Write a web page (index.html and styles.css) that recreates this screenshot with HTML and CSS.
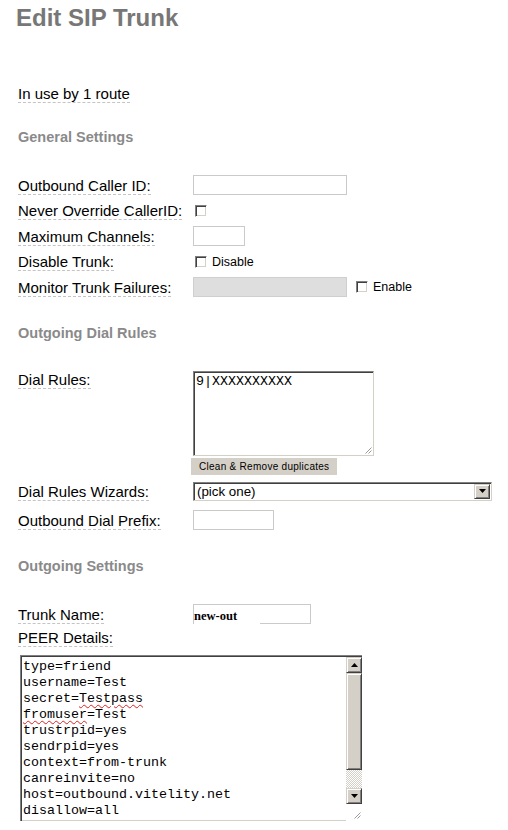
FILE: index.html
```html
<!DOCTYPE html>
<html>
<head>
<meta charset="utf-8">
<title>Edit SIP Trunk</title>
<link rel="stylesheet" href="styles.css">
</head>
<body>
<div class="page">
  <h1 class="title">Edit SIP Trunk</h1>
  <p class="usage"><span class="lbl">In use by 1 route</span></p>

  <h2 class="section">General Settings</h2>
  <div class="rows general">
    <div class="row"><span class="cell"><span class="lbl">Outbound Caller ID:</span></span><div class="ctl"><input class="inp w154" type="text"></div></div>
    <div class="row"><span class="cell"><span class="lbl">Never Override CallerID:</span></span><div class="ctl"><input class="chk" type="checkbox"></div></div>
    <div class="row"><span class="cell"><span class="lbl">Maximum Channels:</span></span><div class="ctl"><input class="inp w52" type="text"></div></div>
    <div class="row"><span class="cell"><span class="lbl">Disable Trunk:</span></span><div class="ctl"><input class="chk" type="checkbox"><span class="small">Disable</span></div></div>
    <div class="row"><span class="cell"><span class="lbl">Monitor Trunk Failures:</span></span><div class="ctl"><input class="inp w154" type="text" disabled><input class="chk gap" type="checkbox"><span class="small">Enable</span></div></div>
  </div>

  <h2 class="section s2">Outgoing Dial Rules</h2>
  <div class="rows dial">
    <div class="row top"><span class="cell"><span class="lbl">Dial Rules:</span></span>
      <div class="stack">
        <div class="area rules">
          <div class="mono">9|XXXXXXXXXX</div>
          <svg class="grip" width="7" height="7" viewBox="0 0 7 7"><path d="M6.5 0.5 L0.5 6.5 M6.5 3.5 L3.5 6.5" stroke="#9a9a9a" stroke-width="1" fill="none"/></svg>
        </div>
        <div class="btn">Clean &amp; Remove duplicates</div>
      </div>
    </div>
    <div class="row r-wiz"><span class="cell"><span class="lbl">Dial Rules Wizards:</span></span>
      <div class="select"><span class="sel-text">(pick one)</span><span class="w-btn sel-btn"><svg width="7" height="4" viewBox="0 0 7 4"><path d="M0 0H7L3.5 4Z" fill="#000"/></svg></span></div>
    </div>
    <div class="row r-pre"><span class="cell"><span class="lbl">Outbound Dial Prefix:</span></span><div class="ctl"><input class="inp w80" type="text"></div></div>
  </div>

  <h2 class="section s3">Outgoing Settings</h2>
  <div class="rows trunk">
    <div class="row"><span class="cell"><span class="lbl">Trunk Name:</span></span>
      <div class="ctl"><div class="tn-box"><span class="tn-val">new-out</span></div></div>
    </div>
  </div>
  <p class="peer-label"><span class="lbl">PEER Details:</span></p>
  <div class="peer">
    <div class="peer-text mono">
      <div>type=friend</div>
      <div>username=Test</div>
      <div>secret=<span class="sp">Testpass</span></div>
      <div><span class="sp">fromuser</span>=Test</div>
      <div>trustrpid=yes</div>
      <div>sendrpid=yes</div>
      <div>context=from-trunk</div>
      <div>canreinvite=no</div>
      <div>host=outbound.vitelity.net</div>
      <div>disallow=all</div>
    </div>
    <div class="vscroll">
      <span class="w-btn sb-btn"><svg width="7" height="4" viewBox="0 0 7 4"><path d="M0 4H7L3.5 0Z" fill="#000"/></svg></span>
      <span class="w-btn thumb"></span>
      <span class="track"></span>
      <span class="w-btn sb-btn"><svg width="7" height="4" viewBox="0 0 7 4"><path d="M0 0H7L3.5 4Z" fill="#000"/></svg></span>
      <span class="corner"><svg width="7" height="7" viewBox="0 0 7 7"><path d="M6.5 0.5 L0.5 6.5 M6.5 3.5 L3.5 6.5" stroke="#9a9a9a" stroke-width="1" fill="none"/></svg></span>
    </div>
  </div>
</div>
</body>
</html>
```

FILE: styles.css
```css
* { box-sizing: border-box; }

body {
  margin: 0;
  background: #fff;
  color: #000;
  font-family: "Liberation Sans", Arial, sans-serif;
}

.page {
  padding: 0 0 0 18px;
}

.title {
  margin: 4px 0 0 -2px;
  font-size: 24px;
  line-height: 28px;
  font-weight: bold;
  color: #777;
}

.usage {
  margin: 53px 0 0;
  font-size: 15px;
  line-height: 17px;
}

.lbl {
  border-bottom: 1px dashed #c4c4c4;
}

.section {
  margin: 27px 0 0;
  font-size: 14.5px;
  line-height: 17px;
  font-weight: bold;
  color: #8a8a8a;
}

.section.s2 { margin-top: 28px; }
.section.s3 { margin-top: 28px; }

.rows {
  display: flex;
  flex-direction: column;
}

.rows.general {
  margin-top: 29px;
  gap: 5.5px;
}

.rows.dial { margin-top: 29px; }
.rows.trunk { margin-top: 29px; }

.row {
  display: grid;
  grid-template-columns: 175px auto;
  align-items: center;
  min-height: 20px;
  font-size: 15px;
  line-height: 17px;
}

.row.top { align-items: start; }
.row.r-wiz { margin-top: 6px; }
.row.r-pre { margin-top: 9px; }

.cell { display: block; }

.ctl {
  display: flex;
  align-items: center;
}

.inp {
  display: block;
  height: 20px;
  margin: 0;
  padding: 0 2px;
  border: 1px solid #cacaca;
  background: #fff;
  font: 13px "Liberation Sans", Arial, sans-serif;
}

.inp:disabled { background: #dedede; border-color: #cfcfcf; }

.w154 { width: 154px; }
.w52 { width: 52px; }
.w80 { width: 81px; }

.chk {
  -webkit-appearance: none;
  appearance: none;
  display: block;
  width: 12px;
  height: 12px;
  margin: 0 0 0 2px;
  border: 1px solid;
  border-color: #808080 #fff #fff #808080;
  box-shadow: inset 1px 1px #404040, inset -1px -1px #d4d0c8;
  background: #fff;
}

.chk.gap { margin-left: 9px; }

.small {
  margin-left: 5px;
  font-size: 12.5px;
  line-height: 14px;
}

.stack {
  display: flex;
  flex-direction: column;
  align-items: flex-start;
}

.mono {
  font-family: "Liberation Mono", "Courier New", monospace;
  font-size: 13.33px;
  line-height: 16px;
}

.area {
  position: relative;
  border-style: solid;
  border-width: 1px;
  border-color: #808080 #d4d0c8 #d4d0c8 #808080;
  box-shadow: inset 1px 1px #404040;
  background: #fff;
}

.rules {
  width: 181px;
  height: 85px;
  padding: 2px 0 0 2px;
}

.grip {
  position: absolute;
  right: 1px;
  bottom: 1px;
}

.btn {
  margin: 2px 0 0 -2px;
  height: 17px;
  padding: 0 8px;
  background: #d4d0c8;
  font-size: 10px;
  letter-spacing: 0.28px;
  line-height: 17px;
  color: #000;
}

.select {
  display: flex;
  align-items: stretch;
  width: 299px;
  height: 19px;
  border-style: solid;
  border-width: 1px;
  border-color: #808080 #d4d0c8 #d4d0c8 #808080;
  box-shadow: inset 1px 1px #404040;
  background: #fff;
  padding: 1px;
}

.sel-text {
  flex: 1;
  padding-left: 2px;
  font-size: 13.33px;
  line-height: 16px;
}

.w-btn {
  display: flex;
  align-items: center;
  justify-content: center;
  background: #d4d0c8;
  border: 1px solid;
  border-color: #d4d0c8 #404040 #404040 #d4d0c8;
  box-shadow: inset 1px 1px #fff, inset -1px -1px #808080;
}

.sel-btn { width: 16px; }

.tn-box {
  display: flex;
  align-items: flex-end;
  width: 118px;
  height: 20px;
  border: 1px solid #cacaca;
  background: #fff;
}

.tn-val {
  display: block;
  width: 66px;
  height: 14px;
  margin-bottom: -1px;
  background: #fff;
  font-family: "Liberation Serif", "Times New Roman", serif;
  font-weight: bold;
  font-size: 12.5px;
  line-height: 12px;
}

.peer-label {
  margin: 5px 0 0;
  font-size: 15px;
  line-height: 17px;
}

.peer {
  display: flex;
  width: 342px;
  height: 166px;
  margin: 9px 0 0 2px;
  border-style: solid;
  border-width: 1px 0 0 1px;
  border-color: #808080;
  box-shadow: inset 1px 1px #404040;
  padding: 1px 0 0 1px;
  background: #fff;
}

.peer-text {
  flex: 1;
  overflow: hidden;
  padding: 2px 0 0 1px;
  border-bottom: 1px solid #d4d0c8;
}

.sp {
  text-decoration: underline wavy #e02020;
  text-decoration-thickness: 1px;
  text-underline-offset: 2px;
}

.vscroll {
  display: flex;
  flex-direction: column;
  width: 16px;
}

.sb-btn { height: 16px; flex: none; }
.thumb { height: 97px; flex: none; }

.track {
  flex: 1;
  background: repeating-conic-gradient(#d4d0c8 0 25%, #fff 0 50%) 0 0 / 2px 2px;
}

.corner {
  height: 17px;
  flex: none;
  display: flex;
  align-items: flex-end;
  justify-content: flex-end;
  padding: 0 1px 2px 0;
  background: #fff;
}
```
